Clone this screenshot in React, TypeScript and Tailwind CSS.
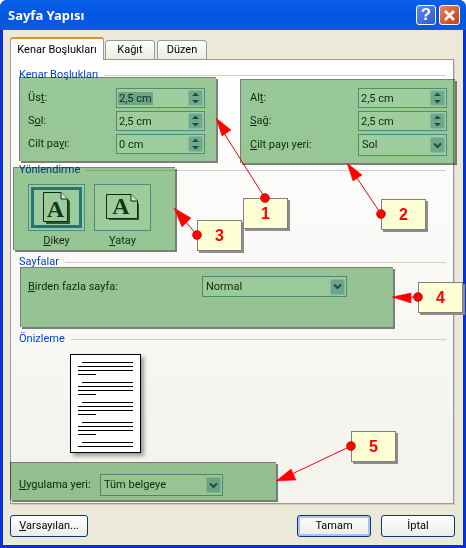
import React from "react";

function Spin() {
  return (
    <span className="w-[15px] h-[16px] rounded-[2px] bg-[#6fab90] border border-[#86bba2] flex flex-col items-center justify-center gap-[2px] shrink-0">
      <svg width="9" height="5" viewBox="0 0 9 5"><path d="M4.5 0.5 L8 4 L1 4 Z" fill="#1d4f3c" /></svg>
      <svg width="9" height="5" viewBox="0 0 9 5"><path d="M4.5 4.5 L8 1 L1 1 Z" fill="#1d4f3c" /></svg>
    </span>
  );
}

function Chevron() {
  return (
    <span className="w-[15px] h-[16px] rounded-[2px] bg-[#6fab90] border border-[#86bba2] flex items-center justify-center shrink-0">
      <svg width="9" height="7" viewBox="0 0 9 7"><path d="M1 1.5 L4.5 5 L8 1.5" fill="none" stroke="#1d4f3c" strokeWidth="2" /></svg>
    </span>
  );
}

function SpinField({ value, selected, className }: { value: string; selected?: boolean; className: string }) {
  return (
    <div className={"h-[20px] border border-[#4c8f78] bg-[#a0cf9f] flex items-center justify-between pl-[1px] pr-[1px] text-[#0b2a10] " + className}>
      <span className={selected ? "bg-[#6fa58a] px-[1px] leading-[13px]" : "px-[1px] leading-[13px]"}>{value}</span>
      <Spin />
    </div>
  );
}

function Combo({ value, className }: { value: string; className: string }) {
  return (
    <div className={"border border-[#4c8f78] bg-[#a0cf9f] flex items-center justify-between pl-[3px] pr-[1px] text-[#0b2a10] " + className}>
      <span>{value}</span>
      <Chevron />
    </div>
  );
}

function SectionTitle({ text, className }: { text: string; className: string }) {
  return (
    <div className={"flex items-center gap-[6px] pl-[8px] pr-[7px] h-[14px] " + className}>
      <span className="text-[#0046d5] leading-[14px]">{text}</span>
      <span className="flex-1 h-px bg-[#d0d0bf]" />
    </div>
  );
}

function Note({ n, className }: { n: string; className: string }) {
  return (
    <div className={"absolute w-[45px] h-[31px] bg-[#ffffd5] border border-[#808080] shadow-[2px_2px_0_#8e8e8e] flex items-center justify-center text-[#f00] font-bold text-[16px] font-['Liberation_Sans',sans-serif] " + className}>
      {n}
    </div>
  );
}

function GreenBox({ className, children }: { className: string; children?: React.ReactNode }) {
  return (
    <div className={"absolute mix-blend-multiply bg-[#99c998] border-t border-l border-[#808080] shadow-[2px_2px_0_#7f7f7f] " + className}>
      {children}
    </div>
  );
}

function PreviewLines() {
  const groups = [0, 1, 2, 3];
  return (
    <div className="w-[71px] h-[99px] bg-white border border-black shadow-[3px_3px_4px_#9a9a96] pt-[7px] pl-[7px] pr-[7px] flex flex-col gap-[7px]">
      {groups.map((g) => (
        <div key={g} className="flex flex-col gap-[3px]">
          <div className="h-px bg-black ml-[4px]" />
          <div className="h-px bg-black" />
          <div className="h-px bg-black" />
          <div className="h-px bg-black w-[18px]" />
        </div>
      ))}
      <div className="flex flex-col gap-[3px]">
        <div className="h-px bg-black ml-[4px]" />
        <div className="h-px bg-black" />
      </div>
    </div>
  );
}

function DocIcon({ landscape }: { landscape?: boolean }) {
  if (landscape) {
    return (
      <svg width="34" height="27" viewBox="0 0 34 27">
        <path d="M3 3 H25 L33 10 V26 H3 Z" fill="#2b5a2b" />
        <path d="M0.5 0.5 H25 L31.5 7 V24.5 H0.5 Z" fill="#a0cf9f" stroke="#0b2a10" />
        <path d="M25 0.5 V7 H31.5" fill="#d7ecd4" stroke="#0b2a10" />
        <text x="15" y="20" textAnchor="middle" fontFamily="Liberation Serif" fontWeight="700" fontSize="24" fill="#0b3a14">A</text>
      </svg>
    );
  }
  return (
    <svg width="27" height="32" viewBox="0 0 27 32">
      <path d="M3 3 H19 L27 9 V32 H3 Z" fill="#2b5a2b" />
      <path d="M0.5 0.5 H18 L24.5 7 V29.5 H0.5 Z" fill="#a0cf9f" stroke="#0b2a10" />
      <path d="M18 0.5 V7 H24.5" fill="#d7ecd4" stroke="#0b2a10" />
      <text x="12.5" y="25" textAnchor="middle" fontFamily="Liberation Serif" fontWeight="700" fontSize="24" fill="#0b3a14">A</text>
    </svg>
  );
}

function WinButton({ children, className }: { children: React.ReactNode; className: string }) {
  return (
    <button className={"h-[22px] rounded-[3px] border border-[#003c74] bg-gradient-to-b from-white to-[#ecebe5] text-black flex items-center justify-center " + className}>
      {children}
    </button>
  );
}

export default function App() {
  return (
    <div className="relative w-[466px] h-[548px] overflow-hidden flex flex-col font-['Roboto',sans-serif] text-[11px] leading-[16px] whitespace-nowrap bg-[#0831d9] rounded-t-[7px]">
      <div className="h-[30px] shrink-0 bg-gradient-to-b from-[#0a5fe8] via-[#0256e0] to-[#0a5be0] flex items-center justify-between pl-[8px] pr-[6px]">
        <span className="text-white font-bold text-[13px] font-['Noto_Sans',sans-serif]">Sayfa Yapısı</span>
        <div className="flex gap-[3px]">
          <div className="w-[20px] h-[20px] rounded-[3px] border border-white bg-gradient-to-br from-[#5a8af0] to-[#2a58d8] flex items-center justify-center text-white font-bold text-[17px] font-['Liberation_Sans',sans-serif]">?</div>
          <div className="w-[21px] h-[20px] rounded-[3px] border border-white bg-gradient-to-br from-[#e9805c] to-[#c63a14] flex items-center justify-center">
            <svg width="13" height="13" viewBox="0 0 13 13"><path d="M2 2 L11 11 M11 2 L2 11" stroke="#fff" strokeWidth="2.6" /></svg>
          </div>
        </div>
      </div>

      <div className="flex-1 ml-[3px] mr-[3px] mb-[3px] bg-[#ece9d8] flex flex-col pl-[7px] pr-[9px] pt-[7px]">
        <div className="flex items-end h-[23px] gap-[1px] relative z-10">
          <div className="w-[94px] h-[23px] bg-[#fefefe] border border-b-0 border-[#919b9c] border-t-[#e68b2c] border-t-2 rounded-t-[3px] flex items-center justify-center text-black">Kenar Boşlukları</div>
          <div className="w-[50px] h-[20px] bg-gradient-to-b from-white to-[#ecebe0] border border-[#919b9c] rounded-t-[3px] flex items-center justify-center text-black">Kağıt</div>
          <div className="w-[50px] h-[20px] ml-[1px] bg-gradient-to-b from-white to-[#ecebe0] border border-[#919b9c] rounded-t-[3px] flex items-center justify-center text-black">Düzen</div>
        </div>
        <div className="h-[445px] -mt-px border border-[#919b9c] bg-gradient-to-b from-white to-[#f3f2ed] shadow-[1px_1px_0_#d0cec0] flex flex-col">
          <SectionTitle text="Kenar Boşlukları" className="mt-[8px]" />
          <SectionTitle text="Yönlendirme" className="mt-[81px]" />
          <SectionTitle text="Sayfalar" className="mt-[78px]" />
          <SectionTitle text="Önizleme" className="mt-[63px]" />
          <div className="ml-[59px] mt-[8px]">
            <PreviewLines />
          </div>
        </div>
        <div className="flex justify-between items-center mt-[11px] mr-[-1px]">
          <WinButton className="w-[78px]"><span><u>V</u>arsayılan...</span></WinButton>
          <div className="flex gap-[10px]">
            <WinButton className="w-[74px] shadow-[inset_0_0_0_2px_#a9c4ee]">Tamam</WinButton>
            <WinButton className="w-[74px]">İptal</WinButton>
          </div>
        </div>
      </div>

      <GreenBox className="left-[19px] top-[77px] w-[197px] h-[84px]">
        <div className="grid grid-cols-[88px_89px] items-center gap-y-[3px] pl-[8px] pt-[10px] text-[#0b2a10]">
          <span>Üs<u>t</u>:</span>
          <SpinField value="2,5 cm" selected className="w-[89px]" />
          <span>S<u>o</u>l:</span>
          <SpinField value="2,5 cm" className="w-[89px]" />
          <span>Cilt pa<u>y</u>ı:</span>
          <SpinField value="0 cm" className="w-[89px]" />
        </div>
      </GreenBox>

      <GreenBox className="left-[240px] top-[79px] w-[215px] h-[84px]">
        <div className="grid grid-cols-[108px_89px] items-center gap-y-[3px] pl-[9px] pt-[8px] text-[#0b2a10]">
          <span>Al<u>t</u>:</span>
          <SpinField value="2,5 cm" className="w-[89px]" />
          <span><u>S</u>ağ:</span>
          <SpinField value="2,5 cm" className="w-[89px]" />
          <span><u>C</u>ilt payı yeri:</span>
          <Combo value="Sol" className="w-[89px] h-[22px]" />
        </div>
      </GreenBox>

      <GreenBox className="left-[13px] top-[167px] w-[162px] h-[83px]">
        <div className="flex gap-[9px] pl-[14px] pt-[16px] text-[#0b2a10]">
          <div className="flex flex-col items-center gap-[2px]">
            <div className="w-[57px] h-[47px] border border-[#4c8f8a] bg-[#a0cf9f] p-[2px]">
              <div className="w-full h-full border-[3px] border-[#1f7a7a] flex items-center justify-center">
                <DocIcon />
              </div>
            </div>
            <span><u>D</u>ikey</span>
          </div>
          <div className="flex flex-col items-center gap-[2px]">
            <div className="w-[57px] h-[47px] border border-[#4c8f8a] bg-[#a0cf9f] flex items-center justify-center">
              <DocIcon landscape />
            </div>
            <span><u>Y</u>atay</span>
          </div>
        </div>
      </GreenBox>

      <GreenBox className="left-[20px] top-[267px] w-[373px] h-[60px]">
        <div className="flex items-center pl-[7px] pt-[8px] text-[#0b2a10]">
          <span className="w-[174px]"><u>B</u>irden fazla sayfa:</span>
          <Combo value="Normal" className="w-[145px] h-[21px]" />
        </div>
      </GreenBox>

      <GreenBox className="left-[10px] top-[462px] w-[266px] h-[38px]">
        <div className="flex items-center pl-[8px] pt-[11px] text-[#0b2a10]">
          <span className="w-[81px]"><u>U</u>ygulama yeri:</span>
          <Combo value="Tüm belgeye" className="w-[123px] h-[22px]" />
        </div>
      </GreenBox>

      <svg className="absolute left-0 top-0 pointer-events-none" width="466" height="548" viewBox="0 0 466 548">
        <g stroke="#f00" fill="#f00">
          <line x1="265" y1="198" x2="222" y2="130" strokeWidth="1" />
          <line x1="381" y1="214" x2="355" y2="175" strokeWidth="1" />
          <line x1="197" y1="235" x2="185" y2="221" strokeWidth="1" />
          <line x1="351" y1="446" x2="292" y2="474" strokeWidth="1" />
          <line x1="418" y1="297" x2="408" y2="297" strokeWidth="1" />
          <path d="M216 118 L231 130 L222 136 Z" strokeWidth="0.5" />
          <path d="M347 163 L362 175 L353 181 Z" strokeWidth="0.5" />
          <path d="M174 208 L191 218 L182 227 Z" strokeWidth="0.5" />
          <path d="M392 297 L411 293 L411 303 Z" strokeWidth="0.5" />
          <path d="M276 481 L291 469 L296 480 Z" strokeWidth="0.5" />
        </g>
      </svg>

      <Note n="3" className="left-[197px] top-[220px]" />
      <Note n="1" className="left-[243px] top-[198px]" />
      <Note n="2" className="left-[381px] top-[199px]" />
      <Note n="4" className="left-[418px] top-[282px]" />
      <Note n="5" className="left-[351px] top-[431px]" />

      <svg className="absolute left-0 top-0 pointer-events-none" width="466" height="548" viewBox="0 0 466 548">
        <g fill="#f00" stroke="#a00000" strokeWidth="0.5">
          <circle cx="265" cy="198" r="4.5" />
          <circle cx="381" cy="214" r="4.5" />
          <circle cx="197" cy="235" r="4.5" />
          <circle cx="418" cy="297" r="4.5" />
          <circle cx="351" cy="446" r="4.5" />
        </g>
      </svg>
    </div>
  );
}
